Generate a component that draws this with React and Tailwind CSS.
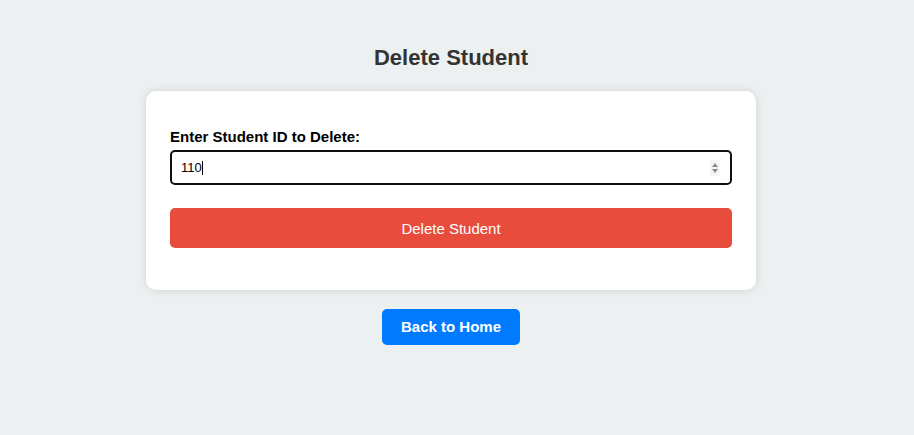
import React from "react";

export default function App() {
  return (
    <div
      className="min-h-[435px] w-full bg-[#ecf0f1] pr-[12px] flex flex-col items-center"
      style={{ fontFamily: '"Liberation Sans", Arial, sans-serif' }}
    >
      <h1 className="mt-[45px] text-[22px] leading-[26px] font-bold text-[#333333]">
        Delete Student
      </h1>
      <div className="mt-[20px] w-[610px] h-[199px] bg-white rounded-[10px] shadow-[0_0_10px_rgba(0,0,0,0.12)] px-[24px] pt-[37px] flex flex-col">
        <label className="text-[15px] leading-[18px] font-bold text-black">
          Enter Student ID to Delete:
        </label>
        <div className="mt-[4px] relative h-[35px] border-2 border-[#101010] rounded-[5px] flex items-center pl-[9px] bg-white">
          <span className="text-[13px] text-black leading-none">110</span>
          <span className="w-[1px] h-[14px] bg-black" />
          <svg
            className="absolute right-[10px] top-1/2 -translate-y-1/2"
            width="10"
            height="16"
            viewBox="0 0 10 16"
          >
            <rect x="0" y="0" width="10" height="16" fill="#f4f4f4" />
            <path d="M2 7 L5 3 L8 7 Z" fill="#8a8a8a" />
            <path d="M2 9 L5 13 L8 9 Z" fill="#8a8a8a" />
          </svg>
        </div>
        <button className="mt-[23px] h-[40px] w-full bg-[#e74c3c] rounded-[5px] text-white text-[15px] pt-[2px]">
          Delete Student
        </button>
      </div>
      <button className="mt-[19px] h-[36px] px-[19px] bg-[#007bff] rounded-[5px] text-white text-[15px] font-bold">
        Back to Home
      </button>
    </div>
  );
}
